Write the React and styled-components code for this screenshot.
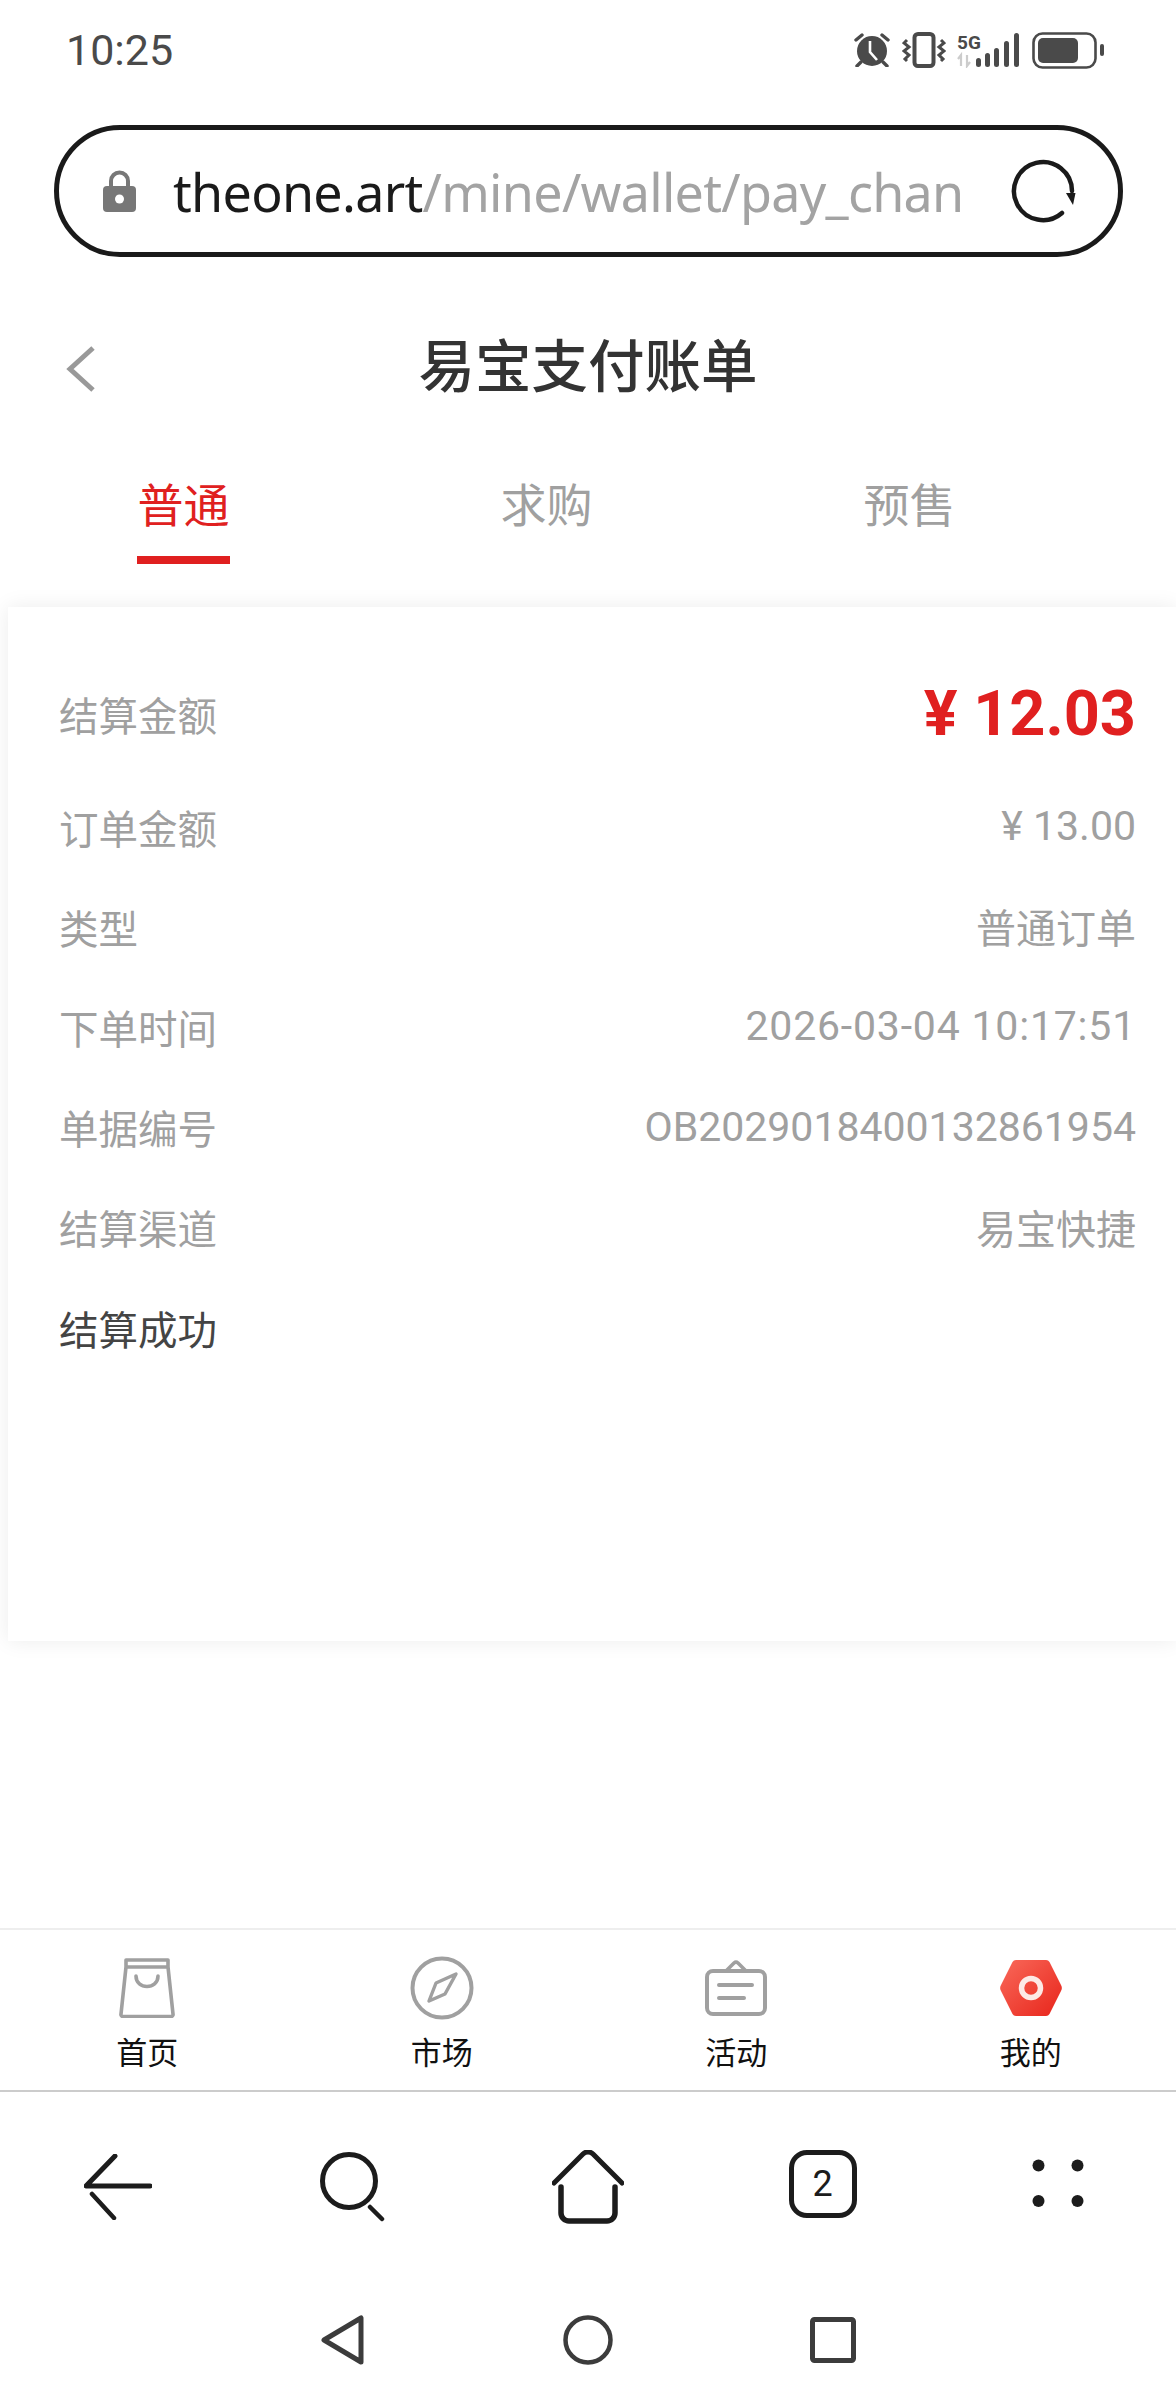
import styled, { createGlobalStyle } from 'styled-components';

const cjk = '"Noto Sans CJK SC", sans-serif';
const latin = 'Roboto, "Noto Sans CJK SC", sans-serif';

const GlobalStyle = createGlobalStyle`
  html, body {
    margin: 0;
    padding: 0;
    background: #fff;
  }
`;

const rows = [
  { label: '订单金额', value: '¥ 13.00', numeric: true },
  { label: '类型', value: '普通订单' },
  { label: '下单时间', value: '2026-03-04 10:17:51', numeric: true, tracking: 0.8 },
  { label: '单据编号', value: 'OB2029018400132861954', numeric: true },
  { label: '结算渠道', value: '易宝快捷' },
];

const tabs = ['普通', '求购', '预售'];

const AlarmIcon = () => (
  <svg width="38" height="34" viewBox="0 0 38 34" fill="none">
    <circle cx="19" cy="18" r="15" fill="#4a4a4a" />
    <path d="M17 8v11l7 8" stroke="#fff" strokeWidth="2.6" />
    <path d="M3 7l6-5M35 7l-6-5M8 29l-4 4M30 29l4 4" stroke="#4a4a4a" strokeWidth="3.4" strokeLinecap="round" />
  </svg>
);

const VibrateIcon = () => (
  <svg width="44" height="36" viewBox="0 0 44 36" fill="none" stroke="#4a4a4a">
    <rect x="12.5" y="2" width="19" height="32" rx="3.5" strokeWidth="4" />
    <path d="M5 8l-3 3 5 4-5 4 5 4-4 4 2 2M39 8l3 3-5 4 5 4-5 4 4 4-2 2" strokeWidth="3" />
  </svg>
);

const SignalIcon = () => (
  <svg width="64" height="36" viewBox="0 0 64 36">
    <text x="0" y="17" fontFamily="Roboto, sans-serif" fontWeight="700" fontSize="19" fill="#4a4a4a">5G</text>
    <path d="M4 34V23l-3 4M10 23v11l3-4" stroke="#ccc" strokeWidth="2.2" fill="none" />
    <rect x="19" y="26" width="5" height="9" rx="2.5" fill="#4a4a4a" />
    <rect x="28" y="21" width="5" height="14" rx="2.5" fill="#4a4a4a" />
    <rect x="37" y="16" width="5" height="19" rx="2.5" fill="#4a4a4a" />
    <rect x="47" y="9" width="5" height="26" rx="2.5" fill="#4a4a4a" />
    <rect x="57" y="1" width="5" height="34" rx="2.5" fill="#4a4a4a" />
  </svg>
);

const BatteryIcon = () => (
  <svg width="72" height="37" viewBox="0 0 72 37">
    <rect x="1.5" y="1.5" width="62" height="34" rx="9" fill="none" stroke="#4a4a4a" strokeWidth="2.6" />
    <rect x="6" y="6" width="40" height="25" rx="5" fill="#4a4a4a" />
    <rect x="68" y="12" width="4" height="12" rx="2" fill="#4a4a4a" />
  </svg>
);

const LockIcon = () => (
  <svg width="33" height="42" viewBox="0 0 33 42">
    <path d="M8 19v-8a8.5 8.5 0 0 1 17 0v8" fill="none" stroke="#777" strokeWidth="4" />
    <rect x="0" y="16" width="33" height="26" rx="4" fill="#777" />
    <circle cx="16.5" cy="29" r="4.5" fill="#fff" />
  </svg>
);

const ReloadIcon = () => (
  <svg width="70" height="70" viewBox="0 0 70 70" fill="none">
    <path d="M54 57A29 29 0 1 1 64 35" stroke="#1a1a1a" strokeWidth="4.5" strokeLinecap="round" />
    <path d="M58 37h9.5l-2.5 12z" fill="#1a1a1a" />
  </svg>
);

const ChevronIcon = () => (
  <svg width="30" height="48" viewBox="0 0 30 48" fill="none">
    <path d="M27 3L4 24l23 21" stroke="#999" strokeWidth="5" />
  </svg>
);

const BagIcon = () => (
  <svg width="56" height="60" viewBox="0 0 56 60" fill="none" stroke="#a0a0a0" strokeWidth="3.6" strokeLinejoin="round">
    <path d="M7 9V2h42v7M7 9h42l5 47a2 2 0 0 1-2 2.5H4A2 2 0 0 1 2 56z" />
    <path d="M17 18c0 14 22 14 22 0" strokeLinecap="round" />
  </svg>
);

const CompassIcon = () => (
  <svg width="64" height="64" viewBox="0 0 64 64" fill="none" stroke="#a0a0a0">
    <circle cx="32" cy="32" r="29.5" strokeWidth="4" />
    <path d="M46 18L35 38 19 45l7-18z" strokeWidth="3.4" strokeLinejoin="round" />
  </svg>
);

const BoardIcon = () => (
  <svg width="62" height="56" viewBox="0 0 62 56" fill="none" stroke="#a0a0a0" strokeLinecap="round" strokeLinejoin="round">
    <path d="M22 10l7-7a3 3 0 0 1 4 0l7 7" strokeWidth="3.6" />
    <rect x="2" y="11" width="58" height="43" rx="6" strokeWidth="4" />
    <path d="M14 25h33M14 38h25" strokeWidth="4" />
  </svg>
);

const HexIcon = () => (
  <svg width="62" height="56" viewBox="0 0 62 56">
    <defs>
      <linearGradient id="hexFill" x1="0" y1="0" x2="1" y2="1">
        <stop offset="0" stopColor="#f9695a" />
        <stop offset="1" stopColor="#e8251b" />
      </linearGradient>
    </defs>
    <path d="M16 0h30a4 4 0 0 1 3.5 2L61 25a6 6 0 0 1 0 6L49.5 54a4 4 0 0 1-3.5 2H16a4 4 0 0 1-3.5-2L1 31a6 6 0 0 1 0-6L12.5 2A4 4 0 0 1 16 0z" fill="url(#hexFill)" />
    <circle cx="31" cy="28" r="9.5" fill="none" stroke="#fde9e6" strokeWidth="5.5" />
  </svg>
);

const BackArrowIcon = () => (
  <svg width="68" height="66" viewBox="0 0 68 66" fill="none" stroke="#1c1c1c" strokeLinecap="round">
    <path d="M31 2L2 32h64" strokeWidth="5" strokeLinejoin="round" />
    <path d="M8 40l22 24" strokeWidth="4.5" />
  </svg>
);

const SearchIcon = () => (
  <svg width="66" height="70" viewBox="0 0 66 70" fill="none" stroke="#1c1c1c" strokeLinecap="round">
    <circle cx="29" cy="29" r="26.5" strokeWidth="5" />
    <path d="M50 55l12 12" strokeWidth="4.5" />
  </svg>
);

const HomeIcon = () => (
  <svg width="72" height="74" viewBox="0 0 72 74" fill="none" stroke="#1c1c1c" strokeLinecap="round" strokeLinejoin="round">
    <path d="M2 33L31 4a7 7 0 0 1 10 0l29 29" strokeWidth="5" />
    <path d="M9 37v26a8 8 0 0 0 8 8h38a8 8 0 0 0 8-8V37" strokeWidth="5.5" />
  </svg>
);

const NavBackIcon = () => (
  <svg width="44" height="50" viewBox="0 0 44 50" fill="none" stroke="#3c3c3c">
    <path d="M40 3v44L3 25z" strokeWidth="5" strokeLinejoin="round" />
  </svg>
);

const NavHomeIcon = () => (
  <svg width="50" height="50" viewBox="0 0 50 50" fill="none" stroke="#3c3c3c">
    <circle cx="25" cy="25" r="22.5" strokeWidth="4.5" />
  </svg>
);

const NavRecentIcon = () => (
  <svg width="46" height="46" viewBox="0 0 46 46" fill="none" stroke="#3c3c3c">
    <rect x="2.5" y="2.5" width="41" height="41" rx="2" strokeWidth="5" />
  </svg>
);

const navItems = [
  { label: '首页', icon: <BagIcon /> },
  { label: '市场', icon: <CompassIcon /> },
  { label: '活动', icon: <BoardIcon /> },
  { label: '我的', icon: <HexIcon /> },
];

export default function App() {
  return (
    <Page>
      <GlobalStyle />
      <StatusBar>
        <Clock>10:25</Clock>
        <StatusIcons>
          <AlarmIcon />
          <VibrateIcon />
          <SignalIcon />
          <BatteryIcon />
        </StatusIcons>
      </StatusBar>

      <UrlBar>
        <LockIcon />
        <UrlText>
          <strong>theone.art</strong>/mine/wallet/pay_chan
        </UrlText>
        <ReloadIcon />
      </UrlBar>

      <Header>
        <BackButton>
          <ChevronIcon />
        </BackButton>
        <Title>易宝支付账单</Title>
      </Header>

      <Tabs>
        {tabs.map((tab, i) => (
          <Tab key={tab} $active={i === 0}>{tab}</Tab>
        ))}
      </Tabs>

      <Card>
        <AmountRow>
          <Label>结算金额</Label>
          <Amount>¥ 12.03</Amount>
        </AmountRow>
        {rows.map((row) => (
          <Row key={row.label}>
            <Label>{row.label}</Label>
            {row.numeric ? (
              <NumericValue $tracking={row.tracking}>{row.value}</NumericValue>
            ) : (
              <Value>{row.value}</Value>
            )}
          </Row>
        ))}
        <Row>
          <Label $dark>结算成功</Label>
        </Row>
      </Card>

      <BottomNav>
        {navItems.map((item) => (
          <NavItem key={item.label}>
            <NavIcon>{item.icon}</NavIcon>
            <NavLabel>{item.label}</NavLabel>
          </NavItem>
        ))}
      </BottomNav>

      <Toolbar>
        <BackArrowIcon />
        <SearchIcon />
        <HomeIcon />
        <TabCount>2</TabCount>
        <Dots viewBox="0 0 52 48" width="52" height="48">
          <circle cx="6.5" cy="6.5" r="6" />
          <circle cx="45.5" cy="6.5" r="6" />
          <circle cx="6.5" cy="42" r="6" />
          <circle cx="45.5" cy="42" r="6" />
        </Dots>
      </Toolbar>

      <SystemNav>
        <NavBackIcon />
        <NavHomeIcon />
        <NavRecentIcon />
      </SystemNav>
    </Page>
  );
}

const Page = styled.div`
  display: flex;
  flex-direction: column;
  width: 1176px;
  height: 2400px;
  overflow: hidden;
  background: #fff;
  font-family: ${cjk};
`;

const StatusBar = styled.div`
  display: flex;
  align-items: center;
  justify-content: space-between;
  height: 100px;
  padding: 0 72px 0 66px;
  box-sizing: border-box;
  flex: none;
`;

const Clock = styled.div`
  font-family: Roboto, sans-serif;
  font-size: 43px;
  color: #4a4a4a;
`;

const StatusIcons = styled.div`
  display: flex;
  align-items: center;
  gap: 11px;
`;

const UrlBar = styled.div`
  display: flex;
  align-items: center;
  flex: none;
  box-sizing: border-box;
  width: 1069px;
  height: 132px;
  margin: 25px 0 0 54px;
  padding: 0 40px 0 44px;
  border: 5px solid #1a1a1a;
  border-radius: 66px;
`;

const UrlText = styled.div`
  flex: 1;
  margin-left: 37px;
  font-family: "Noto Sans", sans-serif;
  font-size: 52px;
  letter-spacing: -0.7px;
  color: #a3a3a3;
  white-space: nowrap;
  overflow: hidden;

  strong {
    font-weight: 400;
    color: #1a1a1a;
  }
`;

const Header = styled.div`
  position: relative;
  display: flex;
  align-items: center;
  justify-content: center;
  flex: none;
  height: 110px;
  margin-top: 50px;
`;

const BackButton = styled.div`
  position: absolute;
  left: 66px;
  top: 38px;
  display: flex;
`;

const Title = styled.div`
  font-size: 56.5px;
  font-weight: 500;
  color: #333;
`;

const Tabs = styled.div`
  display: grid;
  grid-template-columns: repeat(3, 363px);
  flex: none;
  height: 99px;
  margin: 48px 0 0 2px;
`;

const Tab = styled.div`
  justify-self: center;
  box-sizing: border-box;
  height: 99px;
  width: 93px;
  text-align: center;
  font-size: 46px;
  line-height: 74px;
  color: ${(p) => (p.$active ? '#e02020' : '#a0a0a0')};
  border-bottom: 8px solid ${(p) => (p.$active ? '#e02020' : 'transparent')};
`;

const Card = styled.div`
  flex: none;
  box-sizing: border-box;
  height: 1034px;
  margin: 43px 0 0 8px;
  padding: 43px 40px 0 51px;
  background: #fff;
  box-shadow: 0 0 20px rgba(0, 0, 0, 0.08);
`;

const Row = styled.div`
  display: flex;
  align-items: center;
  justify-content: space-between;
  height: 100.2px;
`;

const AmountRow = styled(Row)`
  height: 126px;
`;

const Label = styled.div`
  font-size: 39.5px;
  color: ${(p) => (p.$dark ? '#444' : '#a0a0a0')};
`;

const Value = styled.div`
  font-size: 40px;
  color: #a0a0a0;
`;

const NumericValue = styled.div`
  font-family: ${latin};
  font-size: 41px;
  letter-spacing: ${(p) => p.$tracking || 0}px;
  color: #a0a0a0;
`;

const Amount = styled.div`
  font-family: Roboto, sans-serif;
  font-size: 63px;
  font-weight: 700;
  color: #e02020;
`;

const BottomNav = styled.div`
  display: grid;
  grid-template-columns: repeat(4, 294.5px);
  flex: none;
  box-sizing: border-box;
  height: 164px;
  margin-top: 287px;
  border-top: 2px solid #eee;
  border-bottom: 2px solid #ccc;
`;

const NavItem = styled.div`
  display: flex;
  flex-direction: column;
  align-items: center;
`;

const NavIcon = styled.div`
  display: flex;
  align-items: center;
  justify-content: center;
  height: 64px;
  margin-top: 26px;
`;

const NavLabel = styled.div`
  margin-top: 11px;
  font-size: 31px;
  line-height: 40px;
  color: #111;
`;

const Toolbar = styled.div`
  display: grid;
  grid-template-columns: repeat(5, 235px);
  justify-items: center;
  align-items: center;
  flex: none;
  height: 190px;
`;

const TabCount = styled.div`
  box-sizing: border-box;
  display: flex;
  align-items: center;
  justify-content: center;
  width: 68px;
  height: 68px;
  margin-bottom: 6px;
  border: 5px solid #1c1c1c;
  border-radius: 18px;
  font-family: Roboto, sans-serif;
  font-size: 36px;
  color: #1c1c1c;
`;

const Dots = styled.svg`
  margin-bottom: 8px;
  fill: #1c1c1c;
`;

const SystemNav = styled.div`
  display: grid;
  grid-template-columns: repeat(3, 245px);
  justify-content: center;
  justify-items: center;
  align-items: center;
  flex: none;
  height: 116px;
`;
